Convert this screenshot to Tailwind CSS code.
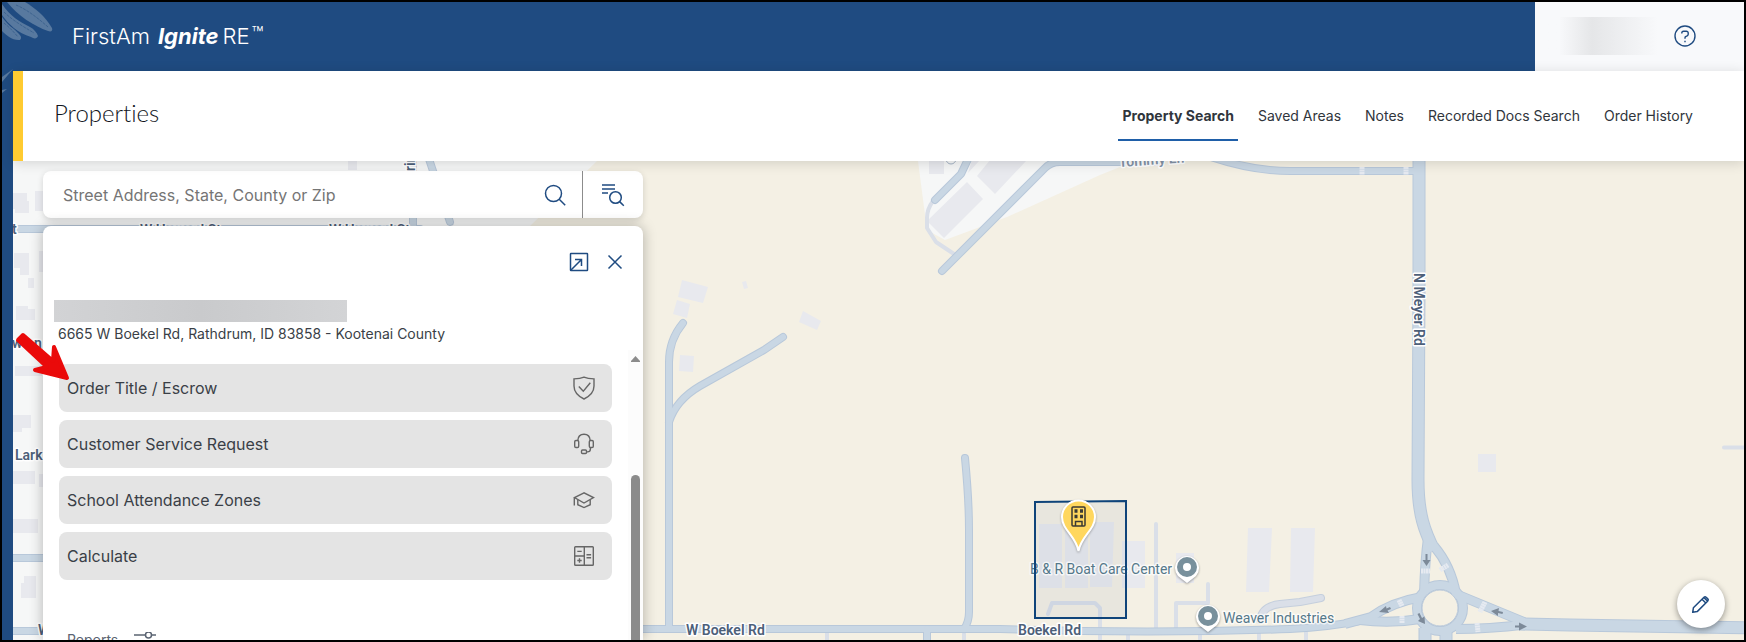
<!DOCTYPE html>
<html lang="en">
<head>
    <meta charset="UTF-8">
    <meta name="viewport" content="width=device-width, initial-scale=1.0">
    <title>FirstAm IgniteRE - Properties</title>
    <script src="https://cdn.jsdelivr.net/npm/@tailwindcss/browser@4"></script>
</head>
<body class="relative flex h-screen flex-col overflow-hidden border-2 border-black bg-[#1f4b81] font-['Inter','Liberation_Sans',sans-serif] text-[#3a3f47]">
    <!-- Top bar -->
    <header class="flex h-[69px] shrink-0 items-stretch">
        <a href="#" class="flex flex-1 items-center pb-[2px] pl-[70px] text-[22px] leading-7 font-light text-white">
            <span>FirstAm</span>
            <span class="ml-2 font-bold italic">Ignite</span><span class="ml-1">RE</span><span class="mb-1 ml-[2px] text-[20px] leading-6">™</span>
        </a>
        <div class="flex w-[209px] items-center justify-end bg-[#f8f9fb] pr-12 pb-[2px]">
            <div class="mr-4 h-[38px] w-[110px] bg-linear-to-r from-[#f8f9fb] from-10% via-[#e5e6e8] via-40% to-[#f8f9fb]"></div>
            <button aria-label="Help" class="text-[#1f4b81]">
                <svg class="size-[22px]" viewBox="0 0 22 22" fill="none" stroke="currentColor" stroke-width="1.4">
                    <circle cx="11" cy="11" r="10"/>
                    <path d="M7.8 8.6V8a1.8 1.8 0 0 1 1.8-1.8h2.8A1.8 1.8 0 0 1 14.200 8v1.200c0 .8-.4 1.300-1 1.600l-1.300.7c-.6.3-.9.7-.9 1.300v1"/>
                    <path d="M11 15.800v1.500"/>
                </svg>
            </button>
        </div>
    </header>

    <div class="ml-[11px] flex min-h-0 flex-1 flex-col">
        <!-- Page header -->
        <div class="z-10 flex h-[90px] shrink-0 items-center justify-between border-l-10 border-[#ffcb31] bg-white pr-[47px] pl-[31px] shadow-[0_2px_12px_rgba(0,0,0,0.14)]">
            <h1 class="mb-[6px] font-['Lato','Inter',sans-serif] text-[24px] leading-8 font-light text-[#12161d] [font-variant-ligatures:none]">Properties</h1>
            <nav class="mt-[2px] flex gap-4 text-sm text-[#30353c]">
                <a href="#" class="border-b-2 border-[#1f5fa8] px-1 pt-3 pb-[13px] font-bold">Property Search</a>
                <a href="#" class="px-1 py-3">Saved Areas</a>
                <a href="#" class="px-1 py-3">Notes</a>
                <a href="#" class="px-1 py-3">Recorded Docs Search</a>
                <a href="#" class="px-1 py-3">Order History</a>
            </nav>
        </div>

        <main class="relative flex min-h-0 flex-1 flex-col bg-[#f4f0e4]">
            <!-- Map -->
            <svg class="absolute inset-0 size-full" viewBox="13 161 1731 479" preserveAspectRatio="xMinYMin slice" aria-label="Map">
                <defs>
                    <g id="lanes" fill="none" stroke-linecap="round" stroke-linejoin="round">
                        <path d="M669 629V362Q669 340 683 323"/>
                        <path d="M669 422Q676 400 700 386L764 350 783 337"/>
                        <path d="M965 458Q969 500 969 530V612Q969 622 964 629"/>
                        <path d="M942 271 1045 168Q1051 162 1060 162H1160"/>
                        <path d="M643 629H1000Q1150 634 1290 629 1330 627 1365 620"/>
                        <path d="M970 155 961 174 935 200"/>
                        <path d="M1205 155Q1250 171 1290 171H1419"/>
                        <path d="M13 229H420M13 558H43M13 631H43M413 150V229M426 150 450 222M927 629V650"/>
                    </g>
                    <g id="mains" fill="none" stroke-linejoin="round">
                        <path d="M1419 150V290L1418 480C1418 515 1425 532 1434 550"/>
                        <path d="M1519 624 1570 625 1760 628"/>
                        <path d="M1425 628V650M1446 628V650"/>
                    </g>
                    <g id="ramps" fill="none" stroke-linejoin="round">
                        <path d="M1428 538Q1425 560 1424 594"/>
                        <path d="M1434 546Q1451 566 1456 594L1524 622"/>
                        <path d="M1456 629Q1490 629 1530 624"/>
                        <path d="M1422 597Q1392 602 1371 617L1345 624"/>
                        <path d="M1420 619Q1390 624 1360 620"/>
                        <circle cx="1440" cy="608" r="23"/>
                    </g>
                </defs>

                <!-- Town area -->
                <path d="M13 161H597L530 226V640H13Z" fill="#f6f7f7"/>
                <path d="M918 161 927 230 945 240 1007 217 1100 175 1135 161Z" fill="#f6f7f7"/>

                <!-- Buildings -->
                <g fill="#e8e9ee">
                    <path d="M682 280 708 287 703 303 678 297ZM677 300 690 304 687 318 673 314ZM680 355 694 356 693 372 679 371ZM742 282 746 281 748 288 744 289ZM803 311 821 321 817 330 799 322Z"/>
                    <path d="M967 182 983 199 944 238 927 221ZM990 160H1027L995 194 977 176ZM929 160H944V174H929ZM972 160H980L968 173Z"/>
                    <path d="M1039 524H1062V588H1039ZM1065 524H1088V588H1065ZM1090 522H1114L1112 587H1090ZM1122 541H1145V588H1122ZM1176 553H1194V583H1176Z"/>
                    <path d="M1248 528H1272L1269 592H1246ZM1291 528H1315L1313 592H1290ZM1478 454H1496V472H1478Z"/>
                    <path d="M13 193H27V201H29V213H15V209H13ZM35 191H43V211H35ZM14 253H29V275H20V268H14ZM39 251H43V272H39ZM28 278H34V288H28ZM16 306H28V309H35V320H16ZM15 366H42V376H15ZM13 415H31V428H22V432H13ZM13 471H35V484H13ZM39 474H43V487H39ZM13 519H38V533H13ZM24 576H36V598H21V583H24ZM348 161H357V170H348Z"/>
                </g>

                <!-- Driveways -->
                <g fill="none" stroke="#dadfe8" stroke-width="4" stroke-linecap="round" stroke-linejoin="round">
                    <path d="M933 201Q927 209 927 218V228L936 242 954 254"/>
                    <path d="M1156 524V628M1048 614 1052 603H1095L1100 608V640M1176 628V603H1208V584"/>
                    <path d="M1128 632V645M1200 632V645M1259 632V645M1306 630V645M827 632V645M964 632V645M1724 447.500H1750"/>
                    <path d="M1260 620Q1262 606 1280 604L1300 602 1321 598" stroke="#c5cfdd" stroke-width="8"/>
                    <path d="M1260 620Q1262 606 1280 604L1300 602 1321 598" stroke="#dadfe8" stroke-width="6"/>
                </g>

                <!-- Roads: edge first, surface on top -->
                <g stroke="#b8c8da">
                    <use href="#lanes" stroke-width="8"/>
                    <use href="#ramps" stroke-width="10"/>
                    <use href="#mains" stroke-width="13"/>
                </g>
                <g stroke="#c9d7e4">
                    <use href="#lanes" stroke-width="6"/>
                    <use href="#ramps" stroke-width="8"/>
                    <use href="#mains" stroke-width="11"/>
                </g>
                <circle cx="951" cy="159" r="5" fill="#f6f7f7" stroke="#a5b3c5"/>
                <circle cx="1440" cy="608" r="18" fill="#f4f0e4" stroke="#b8c8da"/>

                <!-- Crosswalks -->
                <g stroke="#e6eaf1" stroke-width="5" stroke-dasharray="2 .5" fill="none">
                    <path d="M1421 571H1430M1440 570 1448 565M1399 600 1402 606M1402 616V623M1485 602 1480 612M1477 623 1478 632M1406 167V175M1362 167V175"/>
                </g>

                <!-- Direction arrows -->
                <g fill="#7d8a99">
                    <path d="M1425.500 554h2v6h3l-4 6-4-6h3Z"/>
                    <path d="M1379 612 1386 606 1386.500 608.500 1390 607 1391 609 1387.500 610.500 1389 613ZM1425 624 1418 621 1420 619 1417.500 614 1419.500 613 1422 618 1424.500 616.500ZM1491 611 1499 608 1498.500 611 1503 612 1502.500 614 1498 613 1498 616ZM1527 626.500 1519 622.500V625.500H1515V627.500H1519V630.500Z"/>
                </g>

                <!-- Parcel outline -->
                <path d="M1035 502 1126 501V618H1035Z" fill="#0f447a" fill-opacity=".05" stroke="#0f447a" stroke-width="2"/>

                <!-- Labels -->
                <g class="font-['Roboto',sans-serif] text-sm" stroke="#fff" stroke-width="3" stroke-linejoin="round" paint-order="stroke">
                    <g fill="#4d6079" class="font-semibold">
                        <text x="686" y="635">W Boekel Rd</text>
                        <text x="1018" y="635">Boekel Rd</text>
                        <text x="15" y="460">Lark</text>
                        <text x="12" y="348">w</text>
                        <text x="34" y="348">n</text>
                        <text x="38" y="635">W</text>
                        <text x="12" y="234">t</text>
                        <text x="140" y="235">W Howard St</text>
                        <text x="329" y="235">W Howard St</text>
                        <text transform="translate(1414 273) rotate(90)">N Meyer Rd</text>
                        <text transform="translate(415 171) rotate(-90)">rin</text>
                        <text transform="translate(1119 167) rotate(-4)" fill="#8494a8">Tommy Ln</text>
                    </g>
                    <g fill="#55788a" stroke-opacity=".7">
                        <text x="1030" y="574">B &amp; R Boat Care Center</text>
                        <text x="1223" y="623">Weaver Industries</text>
                    </g>
                </g>
                <path d="M1035 560V580M1126 560V580" stroke="#0f447a" stroke-width="2"/>

                <!-- Place pins -->
                <g id="pin" class="drop-shadow-[0_1px_1px_rgba(0,0,0,0.35)]">
                    <path d="M1187 583 1178 576A12 12 0 1 1 1196 576Z" fill="#fff"/>
                    <circle cx="1187" cy="567" r="7" fill="#fff" stroke="#78909c" stroke-width="6"/>
                </g>
                <use href="#pin" x="21" y="49"/>

                <!-- Selected property -->
                <g class="drop-shadow-[0_1px_1px_rgba(0,0,0,0.3)]">
                    <path d="M1078.500 551C1076 536 1062 530 1062 517A16.500 16.500 0 0 1 1095 517C1095 530 1081 536 1078.500 551Z" fill="#ffd75e" stroke="#fff" stroke-width="2"/>
                    <g fill="none" stroke="#3b3a33" stroke-width="1.500">
                        <rect x="1072" y="507" width="13" height="19" rx="1"/>
                        <path d="M1075.500 526V521.500H1082V526"/>
                        <path d="M1074.500 511H1077.500M1080 511H1083M1074.500 516.500H1077.500M1080 516.500H1083" stroke-width="3.500"/>
                    </g>
                </g>
            </svg>

            <!-- Search and property panel -->
            <div class="relative ml-[30px] flex min-h-0 w-[600px] flex-1 flex-col gap-2 pt-[10px]">
                <form class="flex h-[47px] shrink-0 rounded-lg bg-white text-[#1f4b81] shadow-[0_2px_6px_rgba(0,0,0,0.15)]">
                    <label for="search" class="sr-only">Search properties</label>
                    <input id="search" type="text" placeholder="Street Address, State, County or Zip" class="min-w-0 flex-1 pl-5 text-base text-gray-800 outline-none placeholder:text-[#757575]">
                    <button type="button" aria-label="Search" class="flex w-14 items-center justify-center border-r border-[#8c8c8c]">
                        <svg class="size-6" viewBox="0 0 24 24" fill="none" stroke="currentColor" stroke-width="1.500">
                            <circle cx="10.500" cy="10.500" r="8"/>
                            <path d="m16.200 16.200 6 6"/>
                        </svg>
                    </button>
                    <button type="button" aria-label="Advanced search" class="flex w-[60px] items-center justify-center">
                        <svg class="size-6" viewBox="0 0 24 24" fill="none" stroke="currentColor" stroke-width="1.500">
                            <path d="M1 2h13M1 6h13M1 10h6"/>
                            <circle cx="14.500" cy="14.500" r="5.800"/>
                            <path d="m18.600 18.600 4.200 4.200"/>
                        </svg>
                    </button>
                </form>

                <section class="flex min-h-0 flex-1 flex-col rounded-t-lg bg-white shadow-[0_0_14px_rgba(0,0,0,0.28)]">
                    <div class="flex shrink-0 justify-end gap-3 pt-6 pr-4 text-[#1f4b81]">
                        <button aria-label="Open full report">
                            <svg class="size-6" viewBox="0 0 24 24" fill="none" stroke="currentColor" stroke-width="1.500">
                                <rect x="3.500" y="3.500" width="17" height="17" rx=".5"/>
                                <path d="m4 20 10.500-10.500M8 9.500h6.500V16"/>
                            </svg>
                        </button>
                        <button aria-label="Close">
                            <svg class="size-6" viewBox="0 0 24 24" fill="none" stroke="currentColor" stroke-width="1.500">
                                <path d="m5.500 5.500 13 13M18.500 5.500l-13 13"/>
                            </svg>
                        </button>
                    </div>
                    <div class="mt-[26px] ml-[11px] h-[22px] w-[293px] shrink-0 bg-linear-to-r from-[#d2d3d5] via-[#c9cacc] to-[#d3d4d6]"></div>
                    <p class="mt-[2px] ml-[15px] shrink-0 text-sm">6665 W Boekel Rd, Rathdrum, ID 83858 - Kootenai County</p>

                    <div class="mt-[6px] flex min-h-0 flex-1 overflow-hidden">
                        <div class="flex flex-1 flex-col gap-2 pt-[14px] pr-4 pl-4 text-base">
                            <button class="flex h-12 shrink-0 items-center justify-between rounded-lg bg-[#e4e4e4] pr-4 pl-2">
                                Order Title / Escrow
                                <svg class="size-6" viewBox="0 0 24 24" fill="none" stroke="#666" stroke-width="1.400">
                                    <path d="M12 1.200C9 2.600 5.500 2.900 2 2.900V10c0 6 4.500 10.300 10 13 5.500-2.700 10-7 10-13V2.900c-3.500 0-7-.3-10-1.700Z"/>
                                    <path d="m6.800 10.500 4.500 4.800 7-8.500"/>
                                </svg>
                            </button>
                            <button class="flex h-12 shrink-0 items-center justify-between rounded-lg bg-[#e4e4e4] pr-4 pl-2">
                                Customer Service Request
                                <svg class="size-6" viewBox="0 0 24 24" fill="none" stroke="#666" stroke-width="1.400">
                                    <rect x="2.700" y="8.500" width="4" height="7" rx="1.300"/>
                                    <rect x="17.300" y="8.500" width="4" height="7" rx="1.300"/>
                                    <path d="M5.800 8.500C6 4.500 8.500 2.200 12 2.200s6 2.300 6.200 6.300M18.400 15.500V17c0 1.800-1 2.900-2.900 2.900h-1"/>
                                    <rect x="9.500" y="18" width="5" height="3.500" rx="1"/>
                                </svg>
                            </button>
                            <button class="flex h-12 shrink-0 items-center justify-between rounded-lg bg-[#e4e4e4] pr-4 pl-2">
                                School Attendance Zones
                                <svg class="size-6" viewBox="0 0 24 24" fill="none" stroke="#666" stroke-width="1.400">
                                    <path d="M12 4.800 2.500 9.600 12 15l9.500-5.400L12 4.800ZM2.300 9.600v7.900"/>
                                    <path d="M5.800 12v4.700L12 19.600l6.200-2.900V12"/>
                                </svg>
                            </button>
                            <button class="flex h-12 shrink-0 items-center justify-between rounded-lg bg-[#e4e4e4] pr-4 pl-2">
                                Calculate
                                <svg class="size-6" viewBox="0 0 24 24" fill="none" stroke="#666" stroke-width="1.400">
                                    <rect x="2.700" y="2.700" width="18.600" height="18.600" rx=".8"/>
                                    <path d="M12.300 3v18M3 12h9.300M5.300 7.400h4.400M5.300 16.500h4.400M7.500 14.300v4.400M14.500 10.700h4.600M14.500 13.800h4.600"/>
                                </svg>
                            </button>
                            <h2 class="mt-[42px] flex shrink-0 items-center gap-4 pl-2 text-sm text-[#5b6472]">
                                Reports
                                <svg class="h-4 w-[22px]" viewBox="0 0 22 16" fill="none" stroke="currentColor" stroke-width="1.500">
                                    <path d="M0 3h11M18 3h4M0 13h4M11 13h11"/>
                                    <circle cx="14.500" cy="3" r="3"/>
                                    <circle cx="7.500" cy="13" r="3"/>
                                </svg>
                            </h2>
                        </div>
                        <!-- Scrollbar -->
                        <div class="flex w-[15px] flex-col items-center bg-[#fcfcfc] pt-[6px]">
                            <svg class="h-[6px] w-[9px] shrink-0" viewBox="0 0 9 6" fill="#8b8b8b"><path d="M4.500 0 9 5v1H0V5Z"/></svg>
                            <div class="mt-[113px] w-[9px] flex-1 rounded-t-full bg-[#8b8b8b]"></div>
                        </div>
                    </div>
                </section>
            </div>

            <button aria-label="Draw on map" class="absolute right-[19px] bottom-3 flex size-12 items-center justify-center rounded-full bg-white text-[#1f4b81] shadow-[0_2px_6px_rgba(0,0,0,0.4)]">
                <svg class="size-5" viewBox="0 0 20 20" fill="none" stroke="currentColor" stroke-width="1.500" stroke-linejoin="round">
                    <path d="m1.700 18.300.7-4.500L13 3.200a1.500 1.500 0 0 1 2.100 0l1.700 1.700a1.500 1.500 0 0 1 0 2.100L6.200 17.600ZM11 5.200l3.800 3.800M12.800 3.400l3.800 3.800"/>
                </svg>
            </button>
        </main>
    </div>

    <!-- Eagle wing behind the logo -->
    <svg class="pointer-events-none absolute top-0 left-0 h-[98px] w-[58px]" viewBox="2 2 58 98" fill="#58799f">
        <path d="M7 2h18c10 6 20 14 27 26 1 3-1 4-4 3C34 26 18 16 7 2Z"/>
        <path d="M2 4C10 16 20 22 30 27c4 2 7 6 8 9-1 3-4 3-7 1C18 33 8 24 2 15Z"/>
        <path d="M2 17c6 9 12 11 17 17 2 2 3 4 1 6-7 1-14-5-18-9Z"/>
        <path d="M13 69 2 77v5ZM7 89l-5 1v3Z"/>
        <path d="M16 5c10 4 22 13 32 22M4 12c8 8 20 15 30 21M4 23c5 4 9 8 14 14" fill="none" stroke="#3d638f" stroke-dasharray="3 1"/>
    </svg>

    <!-- Callout arrow -->
    <svg class="pointer-events-none absolute top-[330px] left-[10px] h-[56px] w-[64px]" viewBox="12 332 64 56" fill="#ea0a0a" stroke="#ea0a0a" stroke-width="4" stroke-linejoin="round">
        <path d="M18 340 23 335 53 361 54 347 67 378 35 370 47 367Z"/>
    </svg>
</body>
</html>
